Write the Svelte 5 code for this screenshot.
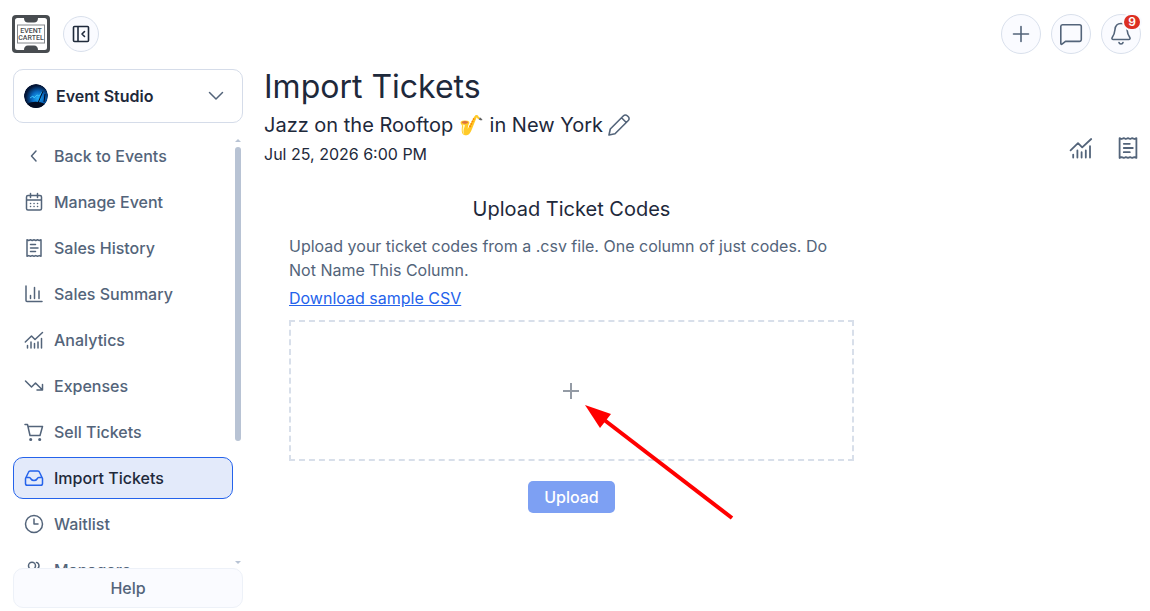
<script>
  let menu = [
    { key: 'back', label: 'Back to Events' },
    { key: 'calendar', label: 'Manage Event' },
    { key: 'receipt', label: 'Sales History' },
    { key: 'bars', label: 'Sales Summary' },
    { key: 'chart', label: 'Analytics' },
    { key: 'trend', label: 'Expenses' },
    { key: 'cart', label: 'Sell Tickets' },
    { key: 'inbox', label: 'Import Tickets' },
    { key: 'clock', label: 'Waitlist' },
    { key: 'people', label: 'Managers' }
  ];

  let current = 'inbox';
  let files;

  // all drawn on a 20x20 grid
  const icons = {
    back: 'M12 5 7.500 10l4.500 5',
    calendar: 'M4 3.500h12a1.500 1.500 0 0 1 1.500 1.500v11.500a1.500 1.500 0 0 1-1.500 1.500H4a1.500 1.500 0 0 1-1.500-1.500V5A1.500 1.500 0 0 1 4 3.500zM2.500 8h15M6.500 1.500v4M13.500 1.500v4M6.500 11.500h.1M10 11.500h.1M13.500 11.500h.1M6.500 14.500h.1M10 14.500h.1M13.500 14.500h.1',
    receipt: 'M3 1.800l1.700.7 1.800-.7 1.700.7 1.800-.7 1.800.7 1.700-.7 1.800.7 1.700-.7v16.500l-1.700-.7-1.800.7-1.700-.7-1.800.7-1.800-.7-1.700.7-1.800-.7-1.700.7zM6.500 6.500h5M6.500 10h7.500M6.500 13.500h5',
    bars: 'M2 2v14.500a1 1 0 0 0 1 1h15M6.500 14.500v-3M10.500 14.500v-11M15 14.500v-7.500',
    chart: 'M1.300 12 7.500 6l3.500 3.500L18.500 2.500M3.500 18v-2.500M7 18v-6M10.500 18v-4.500M14 18v-6M17.500 18V8.500',
    trend: 'M1.500 5l6 6 4-4 7 7M18.500 8.500V14h-5.500',
    cart: 'M1 2.500h2.500l2.500 11h10l2.500-9H4.200M7.500 17.500a.8.8 0 1 0-1.600 0 .8.8 0 0 0 1.600 0zM16.500 17.500a.8.8 0 1 0-1.600 0 .8.8 0 0 0 1.600 0z',
    inbox: 'M1.500 10.500 4.500 4.200a1.800 1.800 0 0 1 1.600-1.200h7.800a1.800 1.800 0 0 1 1.600 1.200l3 6.300v5a1.800 1.800 0 0 1-1.800 1.800H3.300a1.800 1.800 0 0 1-1.800-1.800v-5c0-.6.400-.9 1-.9h2.800c1 0 1.200.5 1.700 1.400.6 1 1.500 1.500 3 1.500s2.400-.5 3-1.500c.5-.9.700-1.400 1.700-1.400h2.800c.6 0 1 .3 1 .9',
    clock: 'M18.500 10a8.500 8.500 0 1 1-17 0 8.500 8.500 0 0 1 17 0zM10 5v5h4',
    people: 'M11.500 5.700a3.500 3.500 0 1 1-7 0 3.500 3.500 0 0 1 7 0zM12.500 2.400a3.500 3.500 0 0 1 0 6.700M2 17.500c0-4 2.200-6 6-6s6 2 6 6M14.500 12c2.500.5 3.500 2.500 3.500 5.500'
  };
</script>

{#snippet icon(key)}
  <svg class="icon" viewBox="0 0 20 20" aria-hidden="true"><path d={icons[key]} /></svg>
{/snippet}

<div class="page">
  <header>
    <a class="logo" href="/" aria-label="Event Cartel">
      <svg viewBox="0 0 38 38" aria-hidden="true">
        <rect width="38" height="38" rx="4" fill="#484c50" />
        <path d="M5.500 3H12c0 3 1.500 4.500 4 4.500h6c2.500 0 4-1.500 4-4.500h6.500A2.500 2.500 0 0 1 35 5.500v27a2.500 2.500 0 0 1-2.500 2.500H26c0-3-1.500-4.500-4-4.500h-6c-2.500 0-4 1.500-4 4.500H5.500A2.500 2.500 0 0 1 3 32.500v-27A2.500 2.500 0 0 1 5.500 3z" fill="#fff" />
        <rect x="5.500" y="10" width="27" height="18" fill="none" stroke="#84888c" />
        <text x="19" y="18">EVENT</text>
        <text x="19" y="25">CARTEL</text>
      </svg>
    </a>
    <button class="round small" aria-label="Collapse menu">
      <svg width="20" height="20" viewBox="0 0 20 20" aria-hidden="true">
        <path d="M3.500 2.500h13a1 1 0 0 1 1 1v13a1 1 0 0 1-1 1h-13a1 1 0 0 1-1-1v-13a1 1 0 0 1 1-1zM7 2.500v15M13.500 7.500 11 10l2.500 2.500" />
      </svg>
    </button>

    <div class="actions">
      <button class="round" aria-label="Create">
        <svg width="24" height="24" viewBox="0 0 24 24" aria-hidden="true"><path d="M12 4.500v15M4.500 12h15" /></svg>
      </button>
      <button class="round" aria-label="Messages">
        <svg width="24" height="24" viewBox="0 0 24 24" aria-hidden="true">
          <path d="M3.500 2.800h17a1.800 1.800 0 0 1 1.800 1.800v13a1.800 1.800 0 0 1-1.800 1.800H6.500L3 22.200c-.6.400-1.200.1-1.200-.6v-17a1.800 1.800 0 0 1 1.700-1.800z" />
        </svg>
      </button>
      <button class="round" aria-label="Notifications, 9 unread">
        <svg width="24" height="24" viewBox="0 0 24 24" aria-hidden="true">
          <path d="M12 1.500c-3.800 0-5.700 2.500-6 6-.4 4-1 5.500-2.800 8-.7 1 0 2 1 2h15.600c1 0 1.700-1 1-2-1.800-2.500-2.400-4-2.800-8-.3-3.500-2.200-6-6-6zM10 20.500c.2 1 1 1.500 2 1.500s1.800-.5 2-1.500" />
        </svg>
        <span class="badge">9</span>
      </button>
    </div>
  </header>

  <div class="body">
    <aside>
      <button class="account">
        <svg class="avatar" viewBox="0 0 24 24" aria-hidden="true">
          <defs>
            <radialGradient id="glow" cx="58%" cy="58%" r="52%">
              <stop offset="0" stop-color="#22b0f8" />
              <stop offset=".5" stop-color="#0868c0" />
              <stop offset="1" stop-color="#041536" />
            </radialGradient>
          </defs>
          <circle cx="12" cy="12" r="12" fill="url(#glow)" />
          <path d="M6 14l3-2 1 2 3-3 2 1 4-5" fill="none" stroke="#38bdf8" />
          <path d="M14 19l5-12M20 18l1-8" stroke="#020b20" />
          <path d="M3 20c5-3 12-3 18 0-4 6-14 6-18 0z" fill="#020b20" />
        </svg>
        <span>Event Studio</span>
        <svg class="icon" viewBox="0 0 20 20" aria-hidden="true"><path d="M3.500 6.500 10 13l6.500-6.500" /></svg>
      </button>

      <div class="scroller">
        <nav>
          {#each menu as item}
            <a href="#{item.key}" class:active={item.key === current} aria-current={item.key === current ? 'page' : undefined}>
              {@render icon(item.key)}
              {item.label}
            </a>
          {/each}
        </nav>
        <div class="scrollbar" aria-hidden="true">
          <i class="up"></i>
          <div class="track"><div class="thumb"></div></div>
          <i class="down"></i>
        </div>
      </div>

      <button class="help">Help</button>
    </aside>

    <main>
      <div class="heading">
        <div>
          <h1>Import Tickets</h1>
          <div class="event">
            Jazz on the Rooftop 🎷 in New York
            <button aria-label="Edit event">
              <svg width="24" height="24" viewBox="0 0 24 24" aria-hidden="true">
                <path d="M2 22l1.300-6L16.500 2.700a2.600 2.600 0 0 1 3.700 0l1.100 1.100a2.600 2.600 0 0 1 0 3.700L8 20.700zM14.500 4.700l4.800 4.800" />
              </svg>
            </button>
          </div>
          <time>Jul 25, 2026 6:00 PM</time>
        </div>
        <div class="links">
          <a href="#chart" aria-label="Analytics">{@render icon('chart')}</a>
          <a href="#receipt" aria-label="Sales History">{@render icon('receipt')}</a>
        </div>
      </div>

      <section>
        <h2>Upload Ticket Codes</h2>
        <p>Upload your ticket codes from a .csv file. One column of just codes. Do Not Name This Column.</p>
        <a class="sample" href="#sample">Download sample CSV</a>
        <div class="zone">
          <label class="drop">
            <input type="file" accept=".csv" aria-label="Ticket codes file" bind:files />
            <svg width="16" height="16" viewBox="0 0 16 16" aria-hidden="true"><path d="M8 0v16M0 8h16" /></svg>
          </label>
          <svg class="arrow" width="150" height="116" viewBox="0 0 150 116" aria-hidden="true">
            <path d="M18 14 147 113" stroke="#f00" stroke-width="4" />
            <path d="M0 0 26 9 15 23z" fill="#f00" />
          </svg>
        </div>
        <button class="upload" disabled={!files || !files.length}>Upload</button>
      </section>
    </main>
  </div>
</div>

<style>
  :global(body) {
    margin: 0;
    background: #fff;
  }

  .page {
    display: flex;
    flex-direction: column;
    box-sizing: border-box;
    height: 100vh;
    padding: 14px 9px 3px 12px;
    overflow: hidden;
    font-family: Inter, "Noto Sans", sans-serif;
    font-size: 16px;
    line-height: 24px;
    color: #1e293b;
  }

  button {
    font: inherit;
    color: inherit;
    padding: 0;
    cursor: pointer;
  }

  svg {
    display: block;
    flex: none;
  }

  .icon,
  .round svg,
  .event svg {
    fill: none;
    stroke: currentColor;
    stroke-width: 1.6;
    stroke-linecap: round;
    stroke-linejoin: round;
  }

  .icon {
    width: 20px;
    height: 20px;
    stroke-width: 1.5;
  }

  header {
    display: flex;
    align-items: center;
    height: 40px;
    margin-bottom: 15px;
  }

  .logo {
    width: 38px;
    margin-right: 13px;
  }

  .logo text {
    font-family: Roboto, sans-serif;
    font-size: 7px;
    font-weight: 500;
    text-anchor: middle;
    fill: #484c50;
  }

  .round {
    position: relative;
    display: flex;
    align-items: center;
    justify-content: center;
    box-sizing: border-box;
    width: 40px;
    height: 40px;
    border: 1px solid #d9e0ec;
    border-radius: 50%;
    background: #fafbff;
    color: #53647a;
  }

  .small {
    width: 36px;
    height: 36px;
    color: #1e293b;
  }

  .actions {
    display: flex;
    gap: 10px;
    margin-left: auto;
  }

  .badge {
    position: absolute;
    top: 0;
    right: 0;
    width: 16px;
    height: 14px;
    border-radius: 7px;
    background: #dc2f22;
    color: #fff;
    font-size: 12px;
    font-weight: 600;
    line-height: 14px;
    text-align: center;
    box-shadow: 0 0 0 2px #fafbff;
  }

  .body {
    display: flex;
    flex: 1;
    gap: 21px;
    min-height: 0;
    padding-left: 1px;
  }

  aside {
    display: flex;
    flex-direction: column;
    flex: none;
    width: 230px;
  }

  .account {
    display: flex;
    align-items: center;
    flex: none;
    gap: 8px;
    height: 54px;
    margin-bottom: 12px;
    padding: 0 16px 0 10px;
    border: 1px solid #d5dce9;
    border-radius: 10px;
    background: #fff;
    font-weight: 600;
  }

  .account span {
    flex: 1;
    text-align: left;
  }

  .account .icon {
    color: #53647a;
  }

  .avatar {
    width: 24px;
    height: 24px;
    border-radius: 50%;
  }

  .scroller {
    display: flex;
    flex: 1;
    gap: 2px;
    min-height: 0;
  }

  nav {
    display: flex;
    flex-direction: column;
    flex: 1;
    gap: 4px;
    overflow-y: auto;
    scrollbar-width: none;
  }

  nav a {
    display: flex;
    align-items: center;
    flex: none;
    gap: 10px;
    box-sizing: border-box;
    height: 42px;
    padding: 0 10px;
    border: 1px solid transparent;
    border-radius: 10px;
    color: #53647a;
    font-weight: 500;
    text-decoration: none;
  }

  nav a.active {
    border-color: #2563eb;
    background: #e3eafa;
    color: #1e293b;
  }

  nav a.active .icon {
    color: #2563eb;
  }

  .scrollbar {
    display: flex;
    flex-direction: column;
    align-items: center;
    gap: 5px;
    width: 6px;
    margin-right: 2px;
    padding: 4px 0;
  }

  .up,
  .down {
    border: 3px solid transparent;
  }

  .up {
    border-top: 0;
    border-bottom-color: #b8c3d4;
  }

  .down {
    border-bottom: 0;
    border-top-color: #b8c3d4;
  }

  .track {
    flex: 1;
    width: 6px;
  }

  .thumb {
    height: 72%;
    border-radius: 3px;
    background: #b8c3d4;
  }

  .help {
    flex: none;
    height: 40px;
    border: 1px solid #edf1f8;
    border-radius: 10px;
    background: #fafbff;
    color: #53647a;
    font-weight: 500;
  }

  main {
    flex: 1;
    min-width: 0;
  }

  .heading {
    display: flex;
    align-items: flex-end;
    justify-content: space-between;
  }

  h1 {
    margin: 0 0 5px;
    font-size: 32px;
    font-weight: 400;
    line-height: 36px;
  }

  .event {
    display: flex;
    align-items: center;
    gap: 4px;
    font-size: 20px;
    line-height: 30px;
  }

  .event button {
    border: 0;
    background: none;
    color: #53647a;
  }

  time {
    display: block;
    margin-top: 2px;
  }

  .links {
    display: flex;
    gap: 23px;
    padding: 0 1px 6px 0;
  }

  .links a {
    color: #53647a;
  }

  .links .icon {
    width: 24px;
    height: 24px;
  }

  section {
    box-sizing: border-box;
    width: 70%;
    padding: 28px 24px 0 25px;
  }

  h2 {
    margin: 0 0 10px;
    font-size: 20px;
    font-weight: 400;
    line-height: 30px;
    text-align: center;
  }

  p {
    margin: 0 0 4px;
    color: #53647a;
  }

  .sample {
    color: #2563eb;
  }

  .zone {
    position: relative;
    margin: 10px 0 20px;
  }

  .drop {
    display: flex;
    align-items: center;
    justify-content: center;
    height: 137px;
    border: 2px dashed #d8dfea;
    cursor: pointer;
  }

  .drop input {
    position: absolute;
    width: 1px;
    height: 1px;
    opacity: 0;
  }

  .drop svg {
    stroke: #949ba5;
    stroke-width: 2;
  }

  /* points at the plus from the lower right */
  .arrow {
    position: absolute;
    top: calc(50% + 14px);
    left: calc(50% + 14px);
    pointer-events: none;
  }

  .upload {
    display: block;
    height: 32px;
    margin: 0 auto;
    padding: 0 16px;
    border: 0;
    border-radius: 5px;
    background: #2563eb;
    color: #fff;
    font-weight: 500;
  }

  .upload:disabled {
    background: #7da0f3;
    cursor: default;
  }
</style>
